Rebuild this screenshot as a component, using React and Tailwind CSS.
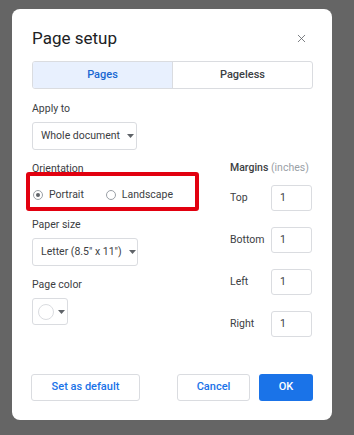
import { X } from "lucide-react";

const font = { fontFamily: "Roboto, 'Liberation Sans', sans-serif" };

function Caret() {
  return (
    <svg width="7" height="4" viewBox="0 0 7 4" className="shrink-0">
      <path d="M0 0h7L3.5 4z" fill="#5f6368" />
    </svg>
  );
}

function Label({ children, className = "" }) {
  return <div className={`h-4 leading-4 text-[10.5px] text-[#3c4043] ${className}`}>{children}</div>;
}

function Radio({ checked, label }) {
  return (
    <label className="flex items-center gap-[6px] text-[10.5px] text-[#3c4043]">
      <span className="w-[10px] h-[10px] rounded-full border border-[#9aa0a6] flex items-center justify-center">
        {checked && <span className="w-[4px] h-[4px] rounded-full bg-[#5f6368]" />}
      </span>
      {label}
    </label>
  );
}

function MarginRow({ name, className = "" }) {
  return (
    <div className={`flex items-center ${className}`}>
      <span className="w-[41px] text-[10.5px] text-[#3c4043]">{name}</span>
      <div className="w-[41px] h-[26px] border border-[#dadce0] rounded-[3px] flex items-center pl-2 text-[10.5px] text-[#3c4043]">
        1
      </div>
    </div>
  );
}

export default function App() {
  return (
    <div className="w-[354px] h-[435px] bg-[#656565] pt-[9px] pl-[12px]" style={font}>
      <div className="w-[320px] h-[411px] bg-white rounded-lg flex flex-col pl-5 pr-[19px] pt-[17px] pb-[19px]">
        {/* header */}
        <div className="flex items-center justify-between h-6">
          <h1 className="text-[17px] leading-6 text-[#202124]">Page setup</h1>
          <X size={13} strokeWidth={1.5} className="text-[#5f6368] mr-[5px]" />
        </div>

        {/* tabs */}
        <div className="mt-[11px] h-[28px] flex border border-[#dadce0] rounded-[3px] overflow-hidden text-[11px] font-medium">
          <div className="flex-1 flex items-center justify-center bg-[#e8f0fe] text-[#1967d2] border-r border-[#dadce0]">Pages</div>
          <div className="flex-1 flex items-center justify-center text-[#3c4043]">Pageless</div>
        </div>

        {/* body */}
        <div className="flex-1 flex mt-[12px]">
          <div className="flex flex-col w-[198px]">
            <Label>Apply to</Label>
            <div className="mt-[5px] w-[105px] h-[28px] border border-[#dadce0] rounded-[3px] flex items-center gap-[7px] pl-2 text-[10.5px] text-[#3c4043]">
              Whole document <Caret />
            </div>

            <Label className="mt-[11px]">Orientation</Label>
            <div className="relative mt-[8px] h-5 flex items-center gap-[22px] pl-px">
              <Radio checked label="Portrait" />
              <Radio label="Landscape" />
              <div className="absolute -left-[6px] -top-[13px] w-[173px] h-[39px] border-4 border-[#e2000f] rounded-[3px]" />
            </div>

            <Label className="mt-[12px]">Paper size</Label>
            <div className="mt-[5px] w-[106px] h-[28px] border border-[#dadce0] rounded-[3px] flex items-center gap-[7px] pl-2 text-[10.5px] text-[#3c4043]">
              Letter (8.5" x 11") <Caret />
            </div>

            <Label className="mt-[11px]">Page color</Label>
            <div className="mt-[5px] w-[36px] h-[27px] border border-[#dadce0] rounded-[3px] flex items-center gap-[4px] pl-[5px]">
              <span className="w-[16px] h-[16px] rounded-full border border-[#dadce0]" />
              <Caret />
            </div>
          </div>

          <div className="flex flex-col mt-[59px]">
            <Label>
              <span className="font-medium">Margins</span> <span className="text-[#9aa0a6]">(inches)</span>
            </Label>
            <MarginRow name="Top" className="mt-[9px]" />
            <MarginRow name="Bottom" className="mt-[16px]" />
            <MarginRow name="Left" className="mt-[16px]" />
            <MarginRow name="Right" className="mt-[16px]" />
          </div>
        </div>

        {/* footer */}
        <div className="flex items-center h-[27px] text-[11px] font-medium">
          <button className="-ml-px w-[109px] h-[27px] border border-[#dadce0] rounded-[3px] text-[#1a73e8]">Set as default</button>
          <button className="ml-auto w-[73px] h-[27px] border border-[#dadce0] rounded-[3px] text-[#1a73e8]">Cancel</button>
          <button className="ml-[9px] w-[54px] h-[27px] rounded-[3px] bg-[#1a73e8] text-white">OK</button>
        </div>
      </div>
    </div>
  );
}
